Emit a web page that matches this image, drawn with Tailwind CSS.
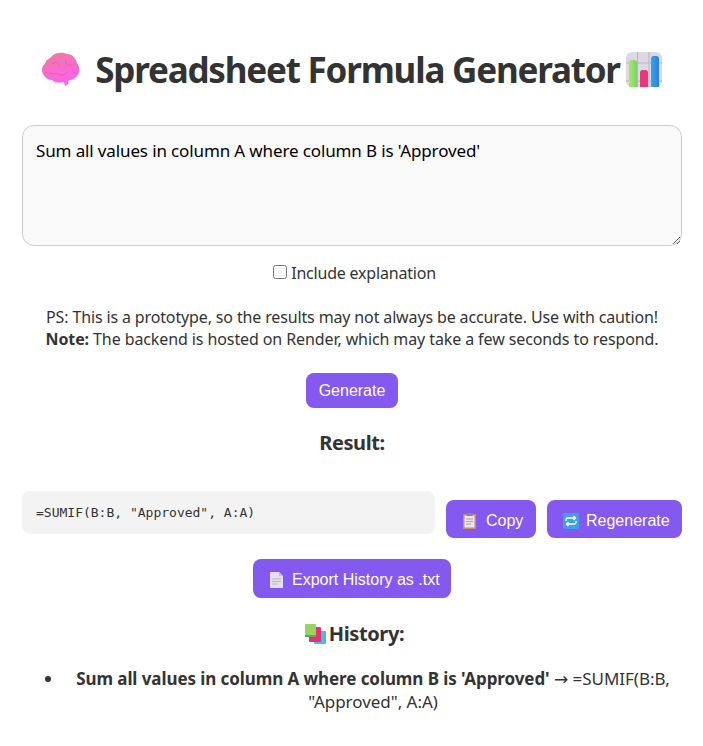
<!DOCTYPE html>
<html lang="en">
<head>
  <meta charset="UTF-8">
  <title>Spreadsheet Formula Generator</title>
  <script src="https://cdn.jsdelivr.net/npm/@tailwindcss/browser@4"></script>
</head>
<body class="bg-white font-['Noto_Sans',sans-serif] text-[#333] overflow-hidden">
  <div class="w-[703px] h-[746px] pl-[22px] pr-[21px] pt-[46px] text-center">

    <!-- title -->
    <h1 class="h-[48px] flex items-center justify-center text-[35px] leading-[48px] font-bold text-[#333] tracking-[-1.2px] whitespace-nowrap">
      <svg class="w-[38px] h-[36px] mr-[15px]" viewBox="0 0 38 36">
        <defs>
          <linearGradient id="brain" x1="0" y1="0" x2="0.3" y2="1">
            <stop offset="0" stop-color="#ef7ba4"/>
            <stop offset="0.5" stop-color="#f56fc4"/>
            <stop offset="1" stop-color="#ff5ff0"/>
          </linearGradient>
        </defs>
        <path d="M3 12C4 7 8 7 10 4C14 0 21 0 25 2C30 2 34 6 35 11C38 15 38 21 35 24C32 28 27 28 26 29L26 32L23 34L22 30C18 31 13 31 10 28C5 28 0 23 0 18C0 15 1 13 3 12Z" fill="url(#brain)"/>
        <path d="M9 12C13 9 17 11 18 15M24 7C22 11 26 14 30 13M7 21C11 23 14 20 17 22C20 24 25 22 26 19" fill="none" stroke="#e0609f" stroke-width="0.8"/>
      </svg>
      <span>Spreadsheet Formula Generator</span>
      <svg class="w-[36px] h-[36px] ml-[6px]" viewBox="0 0 36 36">
        <defs>
          <linearGradient id="barGreen" x1="0" y1="0" x2="1" y2="0">
            <stop offset="0" stop-color="#b6e65c"/>
            <stop offset="1" stop-color="#6fd66f"/>
          </linearGradient>
          <linearGradient id="barBlue" x1="0" y1="0" x2="1" y2="0">
            <stop offset="0" stop-color="#35a6f0"/>
            <stop offset="1" stop-color="#2a80d8"/>
          </linearGradient>
        </defs>
        <rect width="36" height="35" rx="6" fill="#dcd8e4"/>
        <path d="M11.5 0V35M23 0V35M0 11H36M0 29H36" stroke="#b8b4c0" stroke-width="1"/>
        <path d="M3 35V10.500A2.500 2.500 0 0 1 5.500 8H8.500A2.500 2.500 0 0 1 11 10.500V35Z" fill="url(#barGreen)"/>
        <path d="M14 35V20.500A2.500 2.500 0 0 1 16.500 18H19.500A2.500 2.500 0 0 1 22 20.500V35Z" fill="#e8387c"/>
        <path d="M25 35V6.500A2.500 2.500 0 0 1 27.500 4H30.500A2.500 2.500 0 0 1 33 6.500V35Z" fill="url(#barBlue)"/>
      </svg>
    </h1>

    <textarea class="block w-full h-[121px] mt-[31px] px-[13px] py-[13px] bg-[#f9f9f9] border border-[#ccc] rounded-[12px] text-[17px] leading-[23px] text-black tracking-[-0.13px]">Sum all values in column A where column B is 'Approved'</textarea>

    <label class="mt-[15px] h-[24px] flex items-center justify-center pl-[5px] text-[16px] tracking-[-0.2px]">
      <input type="checkbox" class="w-[14px] h-[14px] mr-[4px] mb-[3px] appearance-none bg-white border border-[#767676] rounded-[2.5px]">
      Include explanation
    </label>

    <p class="mt-[21px] text-[16px] leading-[22px] tracking-[-0.14px] whitespace-nowrap">PS: This is a prototype, so the results may not always be accurate. Use with caution!<br><span class="tracking-[-0.1px]"><strong>Note:</strong> The backend is hosted on Render, which may take a few seconds to respond.</span></p>

    <button class="block mx-auto mt-[23px] w-[92px] h-[35px] bg-[#8459f0] text-white rounded-[8px] font-['Liberation_Sans',sans-serif] text-[16px]">Generate</button>

    <h3 class="mt-[21px] h-[27px] text-[20px] leading-[27px] font-bold tracking-[-0.4px]">Result:</h3>

    <!-- result row -->
    <div class="mt-[35px] flex items-start">
      <pre class="w-[413px] h-[43px] pl-[14px] flex items-center bg-[#f3f3f3] rounded-[8px] font-['DejaVu_Sans_Mono',monospace] text-[13px] text-[#333]">=SUMIF(B:B, "Approved", A:A)</pre>
      <button class="ml-[11px] mt-[9px] w-[90px] h-[38px] pl-[17px] pt-[3px] flex items-center bg-[#8459f0] text-white rounded-[8px] font-['Liberation_Sans',sans-serif] text-[16px]">
        <svg class="w-[13px] h-[16px] mr-[10px]" viewBox="0 0 13 16">
          <rect y="1" width="13" height="15" fill="#c98d5e"/>
          <rect x="1.500" y="2.500" width="10" height="12" fill="#e9e4ec"/>
          <rect x="3.500" y="0" width="6" height="3" fill="#8a8494"/>
          <path d="M3 6H10M3 8.500H10M3 11H8" stroke="#a8a3b0" stroke-width="1"/>
        </svg>
        Copy
      </button>
      <button class="ml-[11px] mt-[9px] w-[135px] h-[38px] pl-[16px] pt-[3px] flex items-center bg-[#8459f0] text-white rounded-[8px] font-['Liberation_Sans',sans-serif] text-[16px]">
        <svg class="w-[16px] h-[16px] mr-[7px]" viewBox="0 0 16 16">
          <rect width="16" height="16" rx="2" fill="#3f9fe8"/>
          <path d="M3 8V6.500C3 5.500 3.700 5 4.500 5H12M10.500 3L12.500 5L10.500 7M13 8V9.500C13 10.500 12.300 11 11.500 11H4M5.500 9L3.500 11L5.500 13" fill="none" stroke="#fff" stroke-width="1.300"/>
        </svg>
        Regenerate
      </button>
    </div>

    <button class="mx-auto mt-[21px] w-[198px] h-[39px] pl-[17px] pt-[2px] flex items-center bg-[#8459f0] text-white rounded-[8px] font-['Liberation_Sans',sans-serif] text-[16px]">
      <svg class="w-[13px] h-[16px] mr-[9px]" viewBox="0 0 13 16">
        <path d="M0 0H9L13 4V16H0Z" fill="#e6dff0"/>
        <path d="M9 0L13 4H9Z" fill="#c6bed2"/>
        <path d="M2 7H11M2 9.500H11M2 12H8" stroke="#bdb5ca" stroke-width="1"/>
      </svg>
      Export History as .txt
    </button>

    <h3 class="mt-[22px] h-[27px] flex items-center justify-center pl-[5px] text-[20px] leading-[27px] font-bold tracking-[-0.4px]">
      <svg class="w-[21px] h-[20px] mr-[3px]" viewBox="0 0 21 20">
        <rect x="9" y="7" width="12" height="13" rx="1" fill="#4cb8ea"/>
        <rect x="4" y="3" width="12" height="15" rx="1" fill="#e6336f"/>
        <rect x="0" y="0" width="11" height="13" rx="1" fill="#94d65f"/>
        <rect x="0" y="11" width="11" height="2" fill="#6e9d78"/>
      </svg>
      History:
    </h3>

    <!-- history list -->
    <ul class="mt-[20px] pl-[42px] list-disc text-[17px] leading-[23px] tracking-[-0.03px]">
      <li><strong class="tracking-[-0.08px]">Sum all values in column A where column B is 'Approved'</strong> <span class="font-['DejaVu_Sans',sans-serif] leading-none">→</span> =SUMIF(B:B, "Approved", A:A)</li>
    </ul>
  </div>
</body>
</html>
